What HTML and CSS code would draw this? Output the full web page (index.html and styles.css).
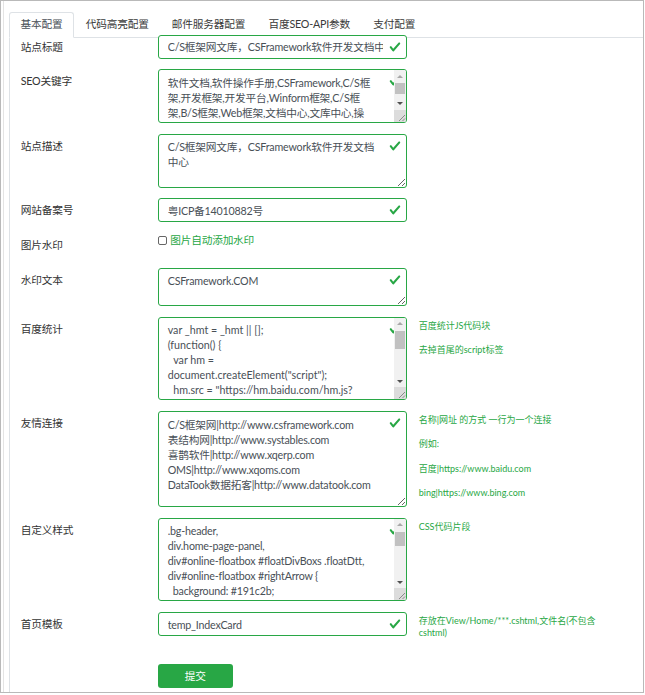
FILE: index.html
```html
<!DOCTYPE html>
<html lang="zh-CN">
<head>
<meta charset="utf-8">
<title>系统配置</title>
<link rel="stylesheet" href="styles.css">
</head>
<body>
<div class="frame">
  <div class="inner">
    <ul class="tabs">
      <li class="tab active">基本配置</li>
      <li class="tab">代码高亮配置</li>
      <li class="tab">邮件服务器配置</li>
      <li class="tab">百度SEO-API参数</li>
      <li class="tab">支付配置</li>
    </ul>
    <form class="pane">
      <div class="row first">
        <label class="lbl">站点标题</label>
        <div class="ctl">
          <input class="field" type="text" value="C/S框架网文库，CSFramework软件开发文档中心">
          <svg class="chk" viewBox="0 0 8 8" width="12" height="12"><path d="M2.3 6.73L.6 4.53c-.4-1.04.46-1.4 1.1-.8l1.1 1.4 3.4-3.8c.6-.63 1.6-.27 1.2.7l-4 4.6c-.43.5-.8.4-1.1.1z"/></svg>
        </div>
      </div>
      <div class="row">
        <label class="lbl">SEO关键字</label>
        <div class="ctl">
          <textarea class="field ta scroll h-seo">软件文档,软件操作手册,CSFramework,C/S框架,开发框架,开发平台,Winform框架,C/S框架,B/S框架,Web框架,文档中心,文库中心,操作手册,帮助文档,开发文档,技术文档</textarea>
          <svg class="chk" viewBox="0 0 8 8" width="12" height="12"><path d="M2.3 6.73L.6 4.53c-.4-1.04.46-1.4 1.1-.8l1.1 1.4 3.4-3.8c.6-.63 1.6-.27 1.2.7l-4 4.6c-.43.5-.8.4-1.1.1z"/></svg>
          <div class="sbar">
            <span class="sb-btn up"></span>
            <span class="sb-track"><span class="sb-thumb t-seo"></span></span>
            <span class="sb-btn down"></span>
            <span class="sb-corner"><svg viewBox="0 0 12 12" width="12" height="12"><path d="M11 5L5 11M11 8.5L8.5 11" stroke="#8a8a8a" stroke-width="1"/></svg></span>
          </div>
        </div>
      </div>
      <div class="row">
        <label class="lbl">站点描述</label>
        <div class="ctl">
          <textarea class="field ta h-desc">C/S框架网文库，CSFramework软件开发文档中心</textarea>
          <svg class="chk" viewBox="0 0 8 8" width="12" height="12"><path d="M2.3 6.73L.6 4.53c-.4-1.04.46-1.4 1.1-.8l1.1 1.4 3.4-3.8c.6-.63 1.6-.27 1.2.7l-4 4.6c-.43.5-.8.4-1.1.1z"/></svg>
        </div>
      </div>
      <div class="row">
        <label class="lbl">网站备案号</label>
        <div class="ctl">
          <input class="field" type="text" value="粤ICP备14010882号">
          <svg class="chk" viewBox="0 0 8 8" width="12" height="12"><path d="M2.3 6.73L.6 4.53c-.4-1.04.46-1.4 1.1-.8l1.1 1.4 3.4-3.8c.6-.63 1.6-.27 1.2.7l-4 4.6c-.43.5-.8.4-1.1.1z"/></svg>
        </div>
      </div>
      <div class="row">
        <label class="lbl">图片水印</label>
        <label class="cbx"><input type="checkbox"><span>图片自动添加水印</span></label>
      </div>
      <div class="row">
        <label class="lbl">水印文本</label>
        <div class="ctl">
          <textarea class="field ta h-wm">CSFramework.COM</textarea>
          <svg class="chk" viewBox="0 0 8 8" width="12" height="12"><path d="M2.3 6.73L.6 4.53c-.4-1.04.46-1.4 1.1-.8l1.1 1.4 3.4-3.8c.6-.63 1.6-.27 1.2.7l-4 4.6c-.43.5-.8.4-1.1.1z"/></svg>
        </div>
      </div>
      <div class="row">
        <label class="lbl">百度统计</label>
        <div class="ctl">
          <textarea class="field ta scroll h-code js">var _hmt = _hmt || [];
(function() {
  var hm = document.createElement("script");
  hm.src = "https://hm.baidu.com/hm.js?5e8b3d1a2f4c6e7b9a0d1c2e3f4a5b6c";
  var s = document.getElementsByTagName("script")[0]; 
  s.parentNode.insertBefore(hm, s);
})();</textarea>
          <svg class="chk" viewBox="0 0 8 8" width="12" height="12"><path d="M2.3 6.73L.6 4.53c-.4-1.04.46-1.4 1.1-.8l1.1 1.4 3.4-3.8c.6-.63 1.6-.27 1.2.7l-4 4.6c-.43.5-.8.4-1.1.1z"/></svg>
          <div class="sbar">
            <span class="sb-btn up"></span>
            <span class="sb-track"><span class="sb-thumb t-hmt"></span></span>
            <span class="sb-btn down"></span>
            <span class="sb-corner"><svg viewBox="0 0 12 12" width="12" height="12"><path d="M11 5L5 11M11 8.5L8.5 11" stroke="#8a8a8a" stroke-width="1"/></svg></span>
          </div>
        </div>
        <div class="help">百度统计JS代码块<br><br>去掉首尾的script标签</div>
      </div>
      <div class="row">
        <label class="lbl">友情连接</label>
        <div class="ctl">
          <textarea class="field ta h-links">C/S框架网|http://www.csframework.com
表结构网|http://www.systables.com
喜鹊软件|http://www.xqerp.com
OMS|http://www.xqoms.com
DataTook数据拓客|http://www.datatook.com</textarea>
          <svg class="chk" viewBox="0 0 8 8" width="12" height="12"><path d="M2.3 6.73L.6 4.53c-.4-1.04.46-1.4 1.1-.8l1.1 1.4 3.4-3.8c.6-.63 1.6-.27 1.2.7l-4 4.6c-.43.5-.8.4-1.1.1z"/></svg>
        </div>
        <div class="help">名称|网址 的方式 一行为一个连接<br><br>例如:<br><br>百度|https://www.baidu.com<br><br>bing|https://www.bing.com</div>
      </div>
      <div class="row">
        <label class="lbl">自定义样式</label>
        <div class="ctl">
          <textarea class="field ta scroll h-code">.bg-header,
div.home-page-panel,
div#online-floatbox #floatDivBoxs .floatDtt,
div#online-floatbox #rightArrow {
  background: #191c2b;
}
.bg-footer,
div.footer-panel {
  background: #191c2b;
  color: #ffffff;
}
.nav-top a:hover,
.nav-top .active a {
  color: #28a745;
}
.doc-title {
  font-size: 16px;
  font-weight: bold;
}</textarea>
          <svg class="chk" viewBox="0 0 8 8" width="12" height="12"><path d="M2.3 6.73L.6 4.53c-.4-1.04.46-1.4 1.1-.8l1.1 1.4 3.4-3.8c.6-.63 1.6-.27 1.2.7l-4 4.6c-.43.5-.8.4-1.1.1z"/></svg>
          <div class="sbar">
            <span class="sb-btn up"></span>
            <span class="sb-track"><span class="sb-thumb t-css"></span></span>
            <span class="sb-btn down"></span>
            <span class="sb-corner"><svg viewBox="0 0 12 12" width="12" height="12"><path d="M11 5L5 11M11 8.5L8.5 11" stroke="#8a8a8a" stroke-width="1"/></svg></span>
          </div>
        </div>
        <div class="help">CSS代码片段</div>
      </div>
      <div class="row">
        <label class="lbl">首页模板</label>
        <div class="ctl">
          <input class="field" type="text" value="temp_IndexCard">
          <svg class="chk" viewBox="0 0 8 8" width="12" height="12"><path d="M2.3 6.73L.6 4.53c-.4-1.04.46-1.4 1.1-.8l1.1 1.4 3.4-3.8c.6-.63 1.6-.27 1.2.7l-4 4.6c-.43.5-.8.4-1.1.1z"/></svg>
        </div>
        <div class="help">存放在View/Home/***.cshtml,文件名(不包含cshtml)</div>
      </div>
      <div class="row actions">
        <span class="lbl"></span>
        <div><button type="button" class="btn">提交</button></div>
      </div>
    </form>
  </div>
</div>
</body>
</html>
```

FILE: styles.css
```css
* { box-sizing: border-box; }
html, body { margin: 0; padding: 0; background: #fff; }
body {
  font-family: Lato, "Noto Sans CJK SC", sans-serif;
  font-size: 10.7px;
  letter-spacing: -0.2px;
  color: #333;
}
.frame {
  width: 644px;
  height: 693px;
  border: 1px solid #b9b9b9;
  overflow: hidden;
}
.inner {
  height: 100%;
  margin-left: 2px;
  border-left: 1px solid #e4e4e4;
  padding: 11px 0 0 5px;
  display: flex;
  flex-direction: column;
}
.tabs {
  list-style: none;
  margin: 0;
  padding: 0;
  display: flex;
  border-bottom: 1px solid #dee2e6;
}
.tab {
  padding: 3px 10.6px 5px;
  line-height: 16px;
  border: 1px solid transparent;
  border-radius: 3px 3px 0 0;
  margin-bottom: -1px;
  color: #3a3a3a;
}
.tab.active {
  border-color: #dee2e6 #dee2e6 #fff;
  background: #fff;
  color: #495057;
}
.pane {
  flex: 1;
  margin: 0;
  border-left: 1px solid #dee2e6;
  padding: 0 0 0 10.7px;
}
.row {
  display: grid;
  grid-template-columns: 125px 249px 182px;
  column-gap: 12px;
  align-items: start;
  margin-bottom: 10.8px;
}
.row.first { margin-top: -3.5px; }
.row.actions { margin-top: 24px; }
.lbl {
  padding: 4px 0;
  line-height: 16px;
  color: #333;
}
.ctl { position: relative; width: 249px; }
.field {
  display: block;
  width: 249px;
  height: 24px;
  margin: 0;
  border: 1px solid #28a745;
  border-radius: 3px;
  padding: 3px 22.5px 3px 9px;
  font: inherit;
  letter-spacing: inherit;
  line-height: 16px;
  color: #495057;
  background: #fff;
  outline: none;
}
.ta {
  padding: 4.5px 22px 4px 9px;
  line-height: 15px;
  resize: vertical;
  overflow: hidden;
  white-space: pre-wrap;
}
.ta.scroll { padding-right: 34px; }
.ta.js { letter-spacing: 0; }
.h-seo { height: 53.5px; }
.h-desc { height: 54px; }
.h-wm { height: 38px; }
.h-code { height: 83.5px; }
.h-links { height: 96px; }
.chk {
  position: absolute;
  left: 231px;
  top: 6px;
  fill: #28a745;
}
.sbar {
  position: absolute;
  top: 1px;
  right: 1px;
  bottom: 1px;
  width: 12px;
  display: flex;
  flex-direction: column;
  background: #f1f1f1;
  border-radius: 0 2px 2px 0;
  overflow: hidden;
}
.sb-btn {
  height: 12px;
  flex: none;
  display: flex;
  align-items: center;
  justify-content: center;
}
.sb-btn::after {
  content: "";
  width: 0;
  height: 0;
  border-left: 3.5px solid transparent;
  border-right: 3.5px solid transparent;
}
.sb-btn.up::after { border-bottom: 3.5px solid #a8a8a8; }
.sb-btn.down::after { border-top: 3.5px solid #505050; }
.sb-track {
  flex: 1;
  display: flex;
  flex-direction: column;
  padding: 1px 1px 0;
}
.sb-thumb { display: block; background: #c1c1c1; }
.t-seo { height: 11px; }
.t-hmt { height: 18px; }
.t-css { height: 14px; }
.sb-corner {
  height: 12px;
  flex: none;
  background: #dcdcdc;
  display: block;
}
.sb-corner svg { display: block; }
.help {
  color: #28a745;
  font-size: 9px;
  letter-spacing: 0;
  line-height: 12.2px;
  padding-top: 3px;
}
.cbx {
  display: flex;
  align-items: center;
  gap: 3.5px;
  color: #28a745;
  line-height: 16px;
  margin-top: -1px;
}
.cbx input {
  appearance: none;
  -webkit-appearance: none;
  width: 9px;
  height: 9px;
  margin: 0;
  border: 1px solid #666;
  border-radius: 2px;
  background: #fff;
}
.btn {
  width: 75px;
  height: 24px;
  border: none;
  border-radius: 3px;
  background: #28a745;
  color: #fff;
  font: inherit;
  letter-spacing: inherit;
  padding: 0;
}
```
